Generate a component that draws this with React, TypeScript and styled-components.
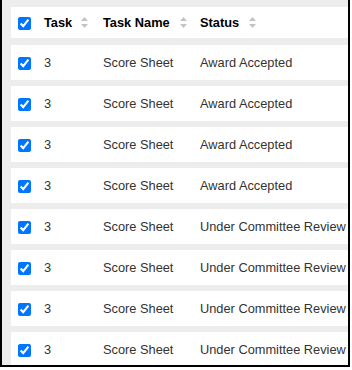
import React from 'react'
import styled, { createGlobalStyle } from 'styled-components'

const GlobalStyle = createGlobalStyle`
  html, body {
    margin: 0;
    padding: 0;
    background: #fff;
  }
  body {
    font-family: "Liberation Sans", Arial, sans-serif;
  }
`

const Frame = styled.div`
  box-sizing: border-box;
  width: 350px;
  height: 367px;
  border: 2px solid #000;
  border-top: none;
  background: #ededed;
  overflow: hidden;
  padding: 7px 0 0 9px;
`

const Table = styled.div`
  display: flex;
  flex-direction: column;
  gap: 6px;
  width: 420px;
`

const Row = styled.div<{ $head?: boolean }>`
  display: grid;
  grid-template-columns: 33px 59px 97px 1fr;
  align-items: center;
  height: ${p => (p.$head ? '31px' : '35px')};
  margin-bottom: ${p => (p.$head ? '1px' : '0')};
  background: #fff;
  font-size: 12.8px;
  color: ${p => (p.$head ? '#000' : '#333')};
  font-weight: ${p => (p.$head ? 700 : 400)};
`

const CheckCell = styled.div`
  display: flex;
  align-items: center;
  padding-left: 3px;
  padding-top: 1px;
`

const Check = styled.input`
  width: 13px;
  height: 13px;
  margin: 0 0 0 4px;
`

const Cell = styled.div`
  white-space: nowrap;
  display: flex;
  align-items: center;
`

const Sort = styled.svg`
  flex: none;
`

function SortIcon({ gap }: { gap: number }) {
  return (
    <Sort width="7" height="11" viewBox="0 0 7 11" style={{ marginLeft: gap }}>
      <path d="M3.5 0 L7 4 H0 Z" fill="#c4c4c4" />
      <path d="M0 7 H7 L3.5 11 Z" fill="#c4c4c4" />
    </Sort>
  )
}

const rows = [
  'Award Accepted',
  'Award Accepted',
  'Award Accepted',
  'Award Accepted',
  'Under Committee Review',
  'Under Committee Review',
  'Under Committee Review',
  'Under Committee Review',
]

export default function App() {
  return (
    <>
      <GlobalStyle />
      <Frame>
        <Table>
          <Row $head>
            <CheckCell>
              <Check type="checkbox" defaultChecked />
            </CheckCell>
            <Cell>Task<SortIcon gap={9} /></Cell>
            <Cell>Task Name<SortIcon gap={10} /></Cell>
            <Cell>Status<SortIcon gap={10} /></Cell>
          </Row>
          {rows.map((status, i) => (
            <Row key={i}>
              <CheckCell>
                <Check type="checkbox" defaultChecked />
              </CheckCell>
              <Cell>3</Cell>
              <Cell>Score Sheet</Cell>
              <Cell>{status}</Cell>
            </Row>
          ))}
        </Table>
      </Frame>
    </>
  )
}
